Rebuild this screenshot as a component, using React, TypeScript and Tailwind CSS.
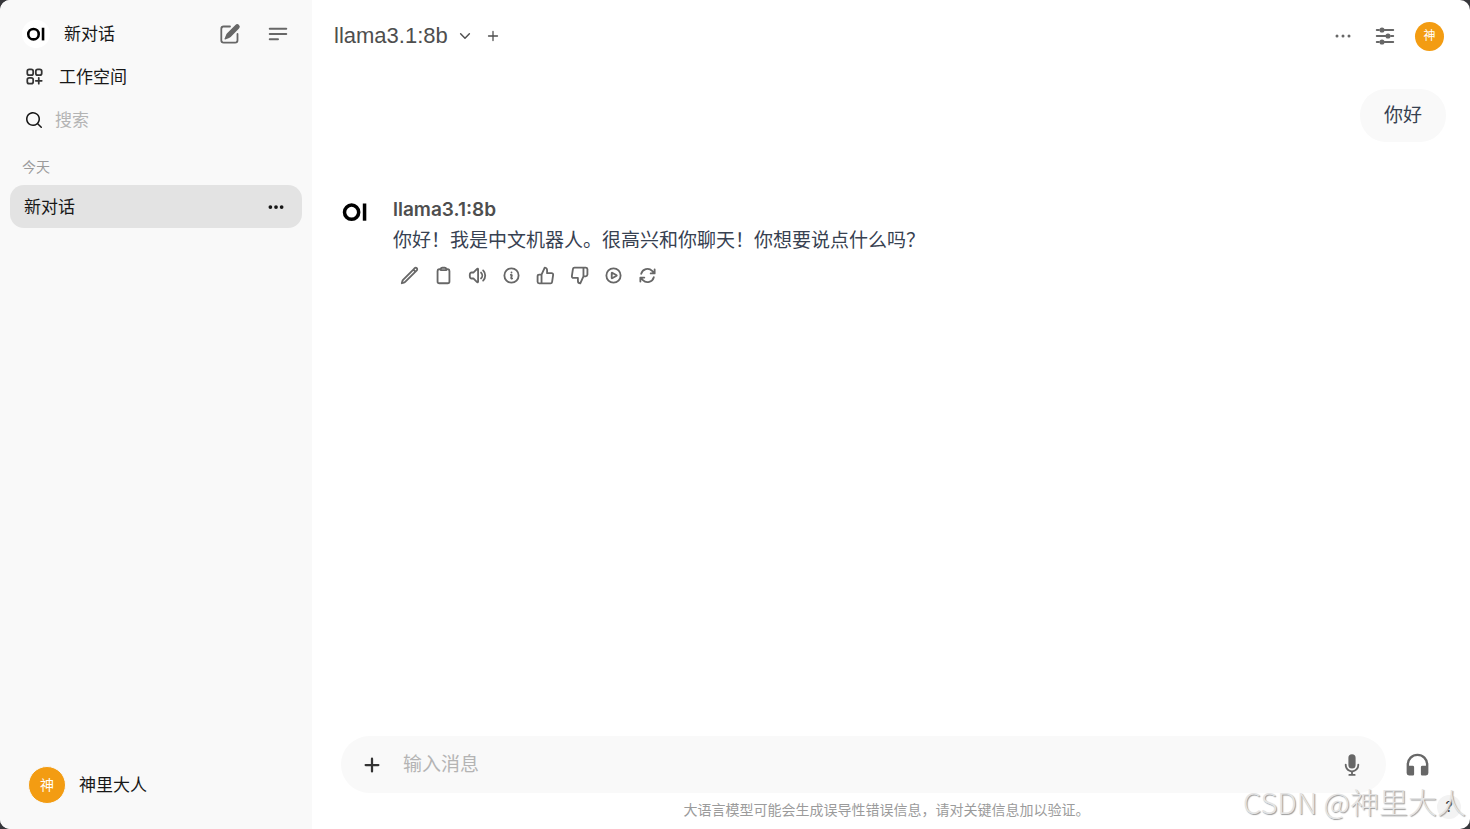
import type { ReactNode } from "react";

type IconProps = { className?: string };

function Stroke({ d, width = 2, className = "size-5" }: IconProps & { d: string; width?: number }) {
  return (
    <svg viewBox="0 0 24 24" fill="none" stroke="currentColor" strokeWidth={width} strokeLinecap="round" strokeLinejoin="round" className={className} aria-hidden="true">
      <path d={d} />
    </svg>
  );
}

function Solid({ d, box = "0 0 20 20", className = "size-6" }: IconProps & { d: string; box?: string }) {
  return (
    <svg viewBox={box} fill="currentColor" fillRule="evenodd" className={className} aria-hidden="true">
      <path d={d} />
    </svg>
  );
}

function Sliders({ className }: IconProps) {
  return (
    <svg viewBox="0 0 24 24" fill="currentColor" stroke="currentColor" strokeWidth="1.9" strokeLinecap="round" className={className} aria-hidden="true">
      <path d="M3.75 6H6M11.5 6h8.75M3.75 12H12.5M18 12h2.25M3.75 18H6M11.5 18h8.75" />
      <circle cx="9" cy="6" r="1.6" />
      <circle cx="15" cy="12" r="1.6" />
      <circle cx="9" cy="18" r="1.6" />
    </svg>
  );
}

function Logo({ className }: IconProps) {
  return (
    <svg viewBox="0 0 38 38" className={className} role="img" aria-label="OI">
      <circle cx="15.6" cy="19.2" r="7.1" fill="none" stroke="#000" strokeWidth="3.5" />
      <rect x="26.8" y="10.5" width="3.5" height="17.2" fill="#000" />
    </svg>
  );
}

const compose =
  "M5.433 13.917l1.262-3.155A4 4 0 017.58 9.42l6.92-6.918a2.121 2.121 0 013 3l-6.92 6.918c-.383.383-.84.685-1.343.886l-3.154 1.262a.5.5 0 01-.65-.65zM3.5 5.75c0-.69.56-1.25 1.25-1.25H10A.75.75 0 0010 3H4.75A2.75 2.75 0 002 5.75v9.5A2.75 2.75 0 004.75 18h9.5A2.75 2.75 0 0017 15.25V10a.75.75 0 00-1.5 0v5.25c0 .69-.56 1.25-1.25 1.25h-9.5c-.69 0-1.25-.56-1.25-1.25v-9.5z";
const workspace =
  "M13.5 16.875h3.375m0 0h3.375m-3.375 0V13.5m0 3.375v3.375M6 10.5h2.25a2.25 2.25 0 002.25-2.25V6a2.25 2.25 0 00-2.25-2.25H6A2.25 2.25 0 003.75 6v2.25A2.25 2.25 0 006 10.5zm0 9.75h2.25A2.25 2.25 0 0010.5 18v-2.25a2.25 2.25 0 00-2.25-2.25H6a2.25 2.25 0 00-2.25 2.25V18A2.25 2.25 0 006 20.25zm9.75-9.75H18a2.25 2.25 0 002.25-2.25V6A2.25 2.25 0 0018 3.75h-2.25A2.25 2.25 0 0013.5 6v2.25a2.25 2.25 0 002.25 2.25z";
const search =
  "M9 3.5a5.5 5.5 0 100 11 5.5 5.5 0 000-11zM2 9a7 7 0 1112.452 4.391l3.328 3.329a.75.75 0 11-1.06 1.06l-3.329-3.328A7 7 0 012 9z";
const smallDots =
  "M2 8a1.5 1.5 0 1 1 3 0 1.5 1.5 0 0 1-3 0ZM6.5 8a1.5 1.5 0 1 1 3 0 1.5 1.5 0 0 1-3 0ZM12.5 6.5a1.5 1.5 0 1 0 0 3 1.5 1.5 0 0 0 0-3Z";
const wideDots =
  "M6.75 12a.75.75 0 11-1.5 0 .75.75 0 011.5 0zM12.75 12a.75.75 0 11-1.5 0 .75.75 0 011.5 0zM18.75 12a.75.75 0 11-1.5 0 .75.75 0 011.5 0z";
const plus =
  "M8.75 3.75a.75.75 0 0 0-1.5 0v3.5h-3.5a.75.75 0 0 0 0 1.5h3.5v3.5a.75.75 0 0 0 1.5 0v-3.5h3.5a.75.75 0 0 0 0-1.5h-3.5v-3.5Z";
const mic =
  "M7 4a3 3 0 016 0v6a3 3 0 11-6 0V4zM5.5 9.643a.75.75 0 00-1.5 0V10c0 3.06 2.29 5.585 5.25 5.954V17.5h-1.5a.75.75 0 000 1.5h4.5a.75.75 0 000-1.5h-1.5v-1.546A6.001 6.001 0 0016 10v-.357a.75.75 0 00-1.5 0V10a4.5 4.5 0 01-9 0v-.357z";
const headphones =
  "M12 5a7 7 0 0 0-7 7v1h3a1.2 1.2 0 0 1 1.2 1.2V20a1 1 0 0 1-1 1H5a2 2 0 0 1-2-2v-7a9 9 0 0 1 18 0v7a2 2 0 0 1-2 2h-3.2a1 1 0 0 1-1-1v-5.8A1.2 1.2 0 0 1 16 13h3v-1a7 7 0 0 0-7-7Z";

const actions: { label: string; d: string }[] = [
  {
    label: "编辑",
    d: "M16.862 4.487l1.687-1.688a1.875 1.875 0 112.652 2.652L6.832 19.82a4.5 4.5 0 01-1.897 1.13l-2.685.8.8-2.685a4.5 4.5 0 011.13-1.897L16.863 4.487zm0 0L19.5 7.125",
  },
  {
    label: "复制",
    d: "M15.666 3.888A2.25 2.25 0 0013.5 2.25h-3c-1.03 0-1.9.693-2.166 1.638m7.332 0c.055.194.084.4.084.612v0a.75.75 0 01-.75.75H9a.75.75 0 01-.75-.75v0c0-.212.03-.418.084-.612m7.332 0c.646.049 1.288.11 1.927.184 1.1.128 1.907 1.077 1.907 2.185V19.5a2.25 2.25 0 01-2.25 2.25H6.75A2.25 2.25 0 014.5 19.5V6.257c0-1.108.806-2.057 1.907-2.185a48.208 48.208 0 011.927-.184",
  },
  {
    label: "朗读",
    d: "M19.114 5.636a9 9 0 010 12.728M16.463 8.288a5.25 5.25 0 010 7.424M6.75 8.25l4.72-4.72a.75.75 0 011.28.53v15.88a.75.75 0 01-1.28.53l-4.72-4.72H4.51c-.88 0-1.704-.507-1.938-1.354A9.01 9.01 0 012.25 12c0-.83.112-1.633.322-2.396C2.806 8.756 3.63 8.25 4.51 8.25H6.75z",
  },
  {
    label: "生成信息",
    d: "M11.25 11.25l.041-.02a.75.75 0 011.063.852l-.708 2.836a.75.75 0 001.063.853l.041-.021M21 12a9 9 0 11-18 0 9 9 0 0118 0zm-9-3.75h.008v.008H12V8.25z",
  },
  {
    label: "点赞",
    d: "M14 9V5a3 3 0 0 0-3-3l-4 9v11h11.28a2 2 0 0 0 2-1.7l1.38-9a2 2 0 0 0-2-2.3zM7 22H4a2 2 0 0 1-2-2v-7a2 2 0 0 1 2-2h3",
  },
  {
    label: "点踩",
    d: "M10 15v4a3 3 0 0 0 3 3l4-9V2H5.72a2 2 0 0 0-2 1.7l-1.38 9a2 2 0 0 0 2 2.3zm7-13h2.67A2.31 2.31 0 0 1 22 4v7a2.31 2.31 0 0 1-2.33 2H17",
  },
  {
    label: "继续生成",
    d: "M21 12a9 9 0 11-18 0 9 9 0 0118 0zM15.91 11.672a.375.375 0 010 .656l-5.603 3.113a.375.375 0 01-.557-.328V8.887c0-.286.307-.466.557-.327l5.603 3.112z",
  },
  {
    label: "重新生成",
    d: "M16.023 9.348h4.992v-.001M2.985 19.644v-4.992m0 0h4.992m-4.993 0l3.181 3.183a8.25 8.25 0 0013.803-3.7M4.031 9.865a8.25 8.25 0 0113.803-3.7l3.181 3.182m0-4.991v4.99",
  },
];

function IconButton({ label, children, className = "" }: { label: string; children: ReactNode; className?: string }) {
  return (
    <button type="button" aria-label={label} className={`flex shrink-0 items-center justify-center ${className}`}>
      {children}
    </button>
  );
}

function Sidebar() {
  return (
    <aside className="flex w-[312px] shrink-0 flex-col bg-[#f9f9f9] text-[17px] leading-6 text-[#171717]">
      <div className="flex items-center pt-3 pr-4 pl-[22px]">
        <a href="#new" className="flex h-[43px] flex-1 items-center gap-[14px]">
          <span className="rounded-full bg-white">
            <Logo className="size-7" />
          </span>
          新对话
        </a>
        <IconButton label="新对话" className="mr-3 size-9 text-[#676767]">
          <Solid d={compose} />
        </IconButton>
        <IconButton label="收起侧边栏" className="size-9 text-[#676767]">
          <Stroke d="M3.75 6.75h16.5M3.75 12h16.5m-16.5 5.25H12" className="size-6" />
        </IconButton>
      </div>
      <a href="#workspace" className="flex h-[43px] items-center gap-[14px] pl-6">
        <Stroke d={workspace} className="size-[21px] text-[#333]" />
        工作空间
      </a>
      <label className="flex h-[43px] items-center gap-[11px] pl-6">
        <Solid d={search} className="size-5" />
        <input
          type="text"
          aria-label="搜索"
          placeholder="搜索"
          className="min-w-0 flex-1 bg-transparent outline-none placeholder:text-[#b4b4b4]"
        />
      </label>
      <h2 className="mt-[14px] pl-[22px] text-sm leading-6 text-[#9b9b9b]">今天</h2>
      <div className="mx-[10px] mt-[6px] flex h-[43px] items-center rounded-[14px] bg-[#e3e3e3] pr-4 pl-[14px]">
        <a href="#chat" className="flex-1">
          新对话
        </a>
        <IconButton label="更多">
          <Solid d={smallDots} box="0 0 16 16" className="size-5" />
        </IconButton>
      </div>
      <button type="button" className="mt-auto mb-[25px] flex items-center gap-[13px] pl-7 text-left">
        <span className="flex size-[38px] items-center justify-center rounded-full border border-[#f9f9f9] bg-[#f39c12] text-sm text-white">神</span>
        神里大人
      </button>
    </aside>
  );
}

export default function App() {
  return (
    <div className="h-screen bg-[#37373b] font-['Inter','Noto_Sans_CJK_SC',sans-serif]">
      <div className="relative flex h-full overflow-hidden rounded-[10px] bg-white">
        <Sidebar />
        <main className="flex min-w-0 flex-1 flex-col">
          <header className="flex h-[72px] shrink-0 items-center pr-[26px] pl-[22px] text-[#4e4e4e]">
            <button type="button" className="flex items-center gap-[10px] font-['Liberation_Sans',sans-serif] text-[22px] leading-7">
              llama3.1:8b
              <Stroke d="M19.5 8.25l-7.5 7.5-7.5-7.5" width={2.5} className="size-[14px]" />
            </button>
            <IconButton label="添加模型" className="ml-3">
              <Stroke d="M12 6v12m6-6H6" width={1.7} className="size-[18px]" />
            </IconButton>
            <div className="ml-auto flex items-center gap-[18px] text-[#676767]">
              <IconButton label="更多">
                <Stroke d={wideDots} width={1.5} className="size-6" />
              </IconButton>
              <IconButton label="对话设置">
                <Sliders className="size-6" />
              </IconButton>
              <IconButton label="用户菜单" className="size-[29px] rounded-full bg-[#f39c12] text-[12px] text-white">
                神
              </IconButton>
            </div>
          </header>

          <section className="flex-1 pt-[17px] pr-6 pl-6 text-[19px] leading-[29px] text-[#374151]">
            <div className="flex justify-end">
              <p className="rounded-[26px] bg-[#f9f9f9] px-6 py-3">你好</p>
            </div>
            <article className="mt-[51px] flex gap-[19px]">
              <Logo className="size-[38px] shrink-0" />
              <div className="pt-[2px]">
                <h3 className="font-semibold text-[#4e4e4e]">llama3.1:8b</h3>
                <p className="mt-[2px]">你好！我是中文机器人。很高兴和你聊天！你想要说点什么吗？</p>
                <div className="mt-1 flex gap-[2px] text-[#676767]">
                  {actions.map((a) => (
                    <IconButton key={a.label} label={a.label} className="size-8">
                      <Stroke d={a.d} width={2.3} className="size-[19px]" />
                    </IconButton>
                  ))}
                </div>
              </div>
            </article>
          </section>

          <footer className="pr-[38px] pl-[29px]">
            <form className="flex items-center gap-[17px]" onSubmit={(e) => e.preventDefault()}>
              <div className="flex h-[57px] flex-1 items-center rounded-full bg-[#f9f9f9] pr-[22px] pl-[19px]">
                <IconButton label="添加附件" className="text-[#333]">
                  <Solid d={plus} box="0 0 16 16" />
                </IconButton>
                <input
                  type="text"
                  aria-label="输入消息"
                  placeholder="输入消息"
                  className="ml-[19px] min-w-0 flex-1 bg-transparent text-[19px] leading-7 outline-none placeholder:text-[#b4b4b4]"
                />
                <IconButton label="语音输入" className="text-[#676767]">
                  <Solid d={mic} />
                </IconButton>
              </div>
              <IconButton label="语音通话" className="text-[#676767]">
                <Solid d={headphones} box="0 0 24 24" className="size-[29px]" />
              </IconButton>
            </form>
            <p className="pt-[5px] pb-[7px] text-center text-sm leading-6 text-[#9b9b9b]">
              大语言模型可能会生成误导性错误信息，请对关键信息加以验证。
            </p>
          </footer>
        </main>

        <button type="button" aria-label="帮助" className="absolute right-[9px] bottom-[10px] size-6 rounded-full bg-[#f3f3f3] text-[14px] leading-6 text-[#333]">
          ?
        </button>
        <span className="pointer-events-none absolute right-1 bottom-2 font-['Noto_Sans_CJK_SC',sans-serif] text-[29px] leading-10 font-light whitespace-nowrap text-[#e4e4e4] [text-shadow:1px_1px_1px_#999]">
          CSDN @神里大人
        </span>
      </div>
    </div>
  );
}
